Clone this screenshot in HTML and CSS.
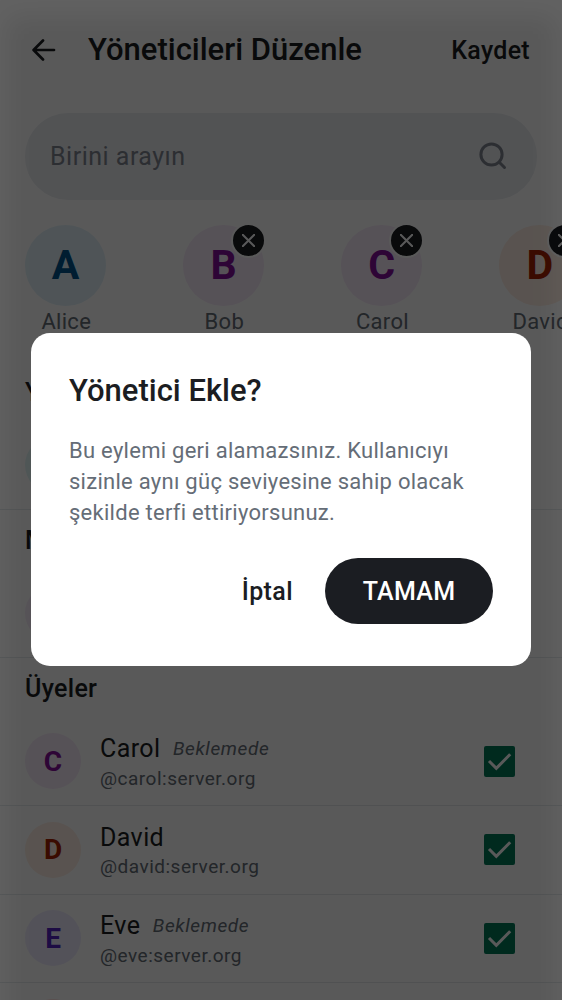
FILE: index.html
```html
<!DOCTYPE html>
<html lang="tr">
<head>
<meta charset="utf-8">
<title>Yöneticileri Düzenle</title>
<link rel="stylesheet" href="styles.css">
</head>
<body>
<div class="screen">
  <header class="topbar">
    <svg class="back" viewBox="0 0 24 22" fill="none" stroke="currentColor" stroke-width="2.7" stroke-linecap="round" stroke-linejoin="round"><path d="M22 11H2M11 1.5 1.6 11l9.4 9.5"/></svg>
    <h1 class="title">Yöneticileri Düzenle</h1>
    <span class="save">Kaydet</span>
  </header>
  <div class="search">
    <span class="placeholder">Birini arayın</span>
    <svg class="search-icon" viewBox="0 0 28 28" fill="none" stroke="currentColor" stroke-width="3" stroke-linecap="round"><circle cx="12.5" cy="12.5" r="10.6"/><path d="m20.3 20.3 5.2 5.2"/></svg>
  </div>
  <div class="selected">
    <div class="person"><div class="avatar large blue">A</div><span class="person-name">Alice</span></div>
    <div class="person"><div class="avatar large purple">B</div><span class="person-name">Bob</span>
      <span class="remove"><svg viewBox="0 0 12 12" fill="none" stroke="currentColor" stroke-width="1.9" stroke-linecap="round"><path d="m.6.6 10.8 10.8M11.4.6.6 11.4"/></svg></span></div>
    <div class="person"><div class="avatar large purple">C</div><span class="person-name">Carol</span>
      <span class="remove"><svg viewBox="0 0 12 12" fill="none" stroke="currentColor" stroke-width="1.9" stroke-linecap="round"><path d="m.6.6 10.8 10.8M11.4.6.6 11.4"/></svg></span></div>
    <div class="person"><div class="avatar large orange">D</div><span class="person-name">David</span>
      <span class="remove"><svg viewBox="0 0 12 12" fill="none" stroke="currentColor" stroke-width="1.9" stroke-linecap="round"><path d="m.6.6 10.8 10.8M11.4.6.6 11.4"/></svg></span></div>
  </div>
  <section class="group">
    <h2 class="group-title">Yöneticiler</h2>
    <div class="row"><div class="avatar cyan"></div></div>
  </section>
  <section class="group">
    <h2 class="group-title">Moderatörler</h2>
    <div class="row"><div class="avatar purple"></div></div>
  </section>
  <section class="group">
    <h2 class="group-title">Üyeler</h2>
    <div class="row">
      <div class="avatar purple">C</div>
      <div class="info"><div class="line"><span class="name">Carol</span><em class="pending">Beklemede</em></div><span class="id">@carol:server.org</span></div>
      <span class="check"><svg viewBox="0 0 31 31" fill="none" stroke="currentColor" stroke-width="3"><path d="m5 15 7.3 7.4L26.2 8.2"/></svg></span>
    </div>
    <div class="row">
      <div class="avatar orange">D</div>
      <div class="info"><div class="line"><span class="name">David</span></div><span class="id">@david:server.org</span></div>
      <span class="check"><svg viewBox="0 0 31 31" fill="none" stroke="currentColor" stroke-width="3"><path d="m5 15 7.3 7.4L26.2 8.2"/></svg></span>
    </div>
    <div class="row">
      <div class="avatar violet">E</div>
      <div class="info"><div class="line"><span class="name">Eve</span><em class="pending">Beklemede</em></div><span class="id">@eve:server.org</span></div>
      <span class="check"><svg viewBox="0 0 31 31" fill="none" stroke="currentColor" stroke-width="3"><path d="m5 15 7.3 7.4L26.2 8.2"/></svg></span>
    </div>
    <div class="row"><div class="avatar red"></div></div>
  </section>
</div>
<div class="scrim">
  <div class="dialog" role="dialog">
    <h2 class="dialog-title">Yönetici Ekle?</h2>
    <p class="dialog-text">Bu eylemi geri alamazsınız. Kullanıcıyı<br>sizinle aynı güç seviyesine sahip olacak<br>şekilde terfi ettiriyorsunuz.</p>
    <div class="actions">
      <span class="cancel">İptal</span>
      <span class="confirm">TAMAM</span>
    </div>
  </div>
</div>
</body>
</html>
```

FILE: styles.css
```css
* { box-sizing: border-box; }
body {
  margin: 0;
  width: 562px;
  height: 1000px;
  overflow: hidden;
  position: relative;
  font-family: Roboto, sans-serif;
  color: #1b1d22;
  background: #fff;
}
h1, h2, p { margin: 0; font-weight: 500; }
svg { display: block; }
.screen { width: 562px; height: 1000px; overflow: hidden; }

.topbar { display: flex; align-items: center; height: 100px; padding: 0 32px; }
.back { width: 24px; height: 22px; }
.title { flex: 1; margin-left: 32px; font-size: 31px; line-height: 40px; white-space: nowrap; }
.save { font-size: 25px; font-weight: 500; letter-spacing: .3px; }

.search {
  display: flex;
  align-items: center;
  justify-content: space-between;
  height: 87px;
  margin: 13px 25px 0;
  padding: 0 30px 0 25px;
  border-radius: 44px;
  background: #eceff3;
  color: #818692;
}
.placeholder { font-size: 25px; letter-spacing: .5px; }
.search-icon { width: 28px; height: 28px; margin-bottom: 2px; }

.selected { display: flex; gap: 77.1px; height: 162px; padding: 25px 0 0 25px; }
.person { position: relative; flex: 0 0 81px; display: flex; flex-direction: column; align-items: center; }
.person-name { padding-left: 1.5px; font-size: 22px; line-height: 31px; letter-spacing: .3px; color: #656d77; }
.remove {
  position: absolute;
  top: -2px;
  right: -2px;
  display: flex;
  align-items: center;
  justify-content: center;
  width: 35px;
  height: 35px;
  border: 2px solid #fff;
  border-radius: 50%;
  background: #1b1d22;
  color: #fff;
}
.remove svg { width: 13px; height: 13px; }

.avatar {
  flex: none;
  display: flex;
  align-items: center;
  justify-content: center;
  width: 56px;
  height: 56px;
  border-radius: 50%;
  font-size: 28px;
  font-weight: 700;
}
.avatar.large { width: 81px; height: 81px; padding-bottom: 2px; font-size: 41px; }
.blue { background: #e2f3fa; color: #00558c; }
.cyan { background: #e3f7f8; }
.purple { background: #f8ecfa; color: #84109d; }
.orange { background: #ffefe4; color: #a72300; }
.violet { background: #f0edff; color: #5525c4; }
.red { background: #ffe4e2; }

.group-title { height: 59.5px; padding: 16px 25px 0; font-size: 25px; line-height: 30px; letter-spacing: .3px; }
.row { display: flex; align-items: center; height: 88.5px; padding: 0 47px 0 25px; border-bottom: 1px solid #e6e9ed; }
.info { flex: 1; margin-left: 19px; }
.line { display: flex; align-items: center; gap: 12.5px; height: 34px; }
.name { font-size: 25px; letter-spacing: .4px; }
.pending { font-size: 19px; letter-spacing: .6px; color: #656d77; }
.id { display: block; font-size: 19px; line-height: 25px; letter-spacing: .5px; color: #656d77; }
.check { width: 31px; height: 31px; border-radius: 2px; background: #007a5a; color: #fff; }

.scrim {
  position: absolute;
  inset: 0;
  display: flex;
  align-items: center;
  justify-content: center;
  background: rgba(0, 0, 0, .615);
}
.scrim::before {
  content: "";
  position: absolute;
  inset: 16px 6px -40px;
  border-radius: 12px;
  background: rgba(0, 0, 0, .09);
  filter: blur(12px);
}
.dialog {
  position: relative;
  width: 500px;
  height: 333px;
  margin-bottom: 1px;
  padding: 39px 38px 38px;
  border-radius: 19px;
  background: #fff;
}
.dialog-title { font-size: 31px; line-height: 38px; }
.dialog-text { margin-top: 25px; font-size: 22px; font-weight: 400; line-height: 31px; letter-spacing: .27px; color: #656d77; white-space: nowrap; }
.actions { display: flex; justify-content: flex-end; align-items: center; gap: 32px; margin-top: 30px; }
.cancel { font-size: 25px; font-weight: 500; letter-spacing: .4px; }
.confirm {
  display: flex;
  align-items: center;
  justify-content: center;
  width: 168px;
  height: 66px;
  border-radius: 33px;
  background: #1b1d22;
  color: #fff;
  font-size: 25px;
  font-weight: 500;
  letter-spacing: .3px;
}
```
